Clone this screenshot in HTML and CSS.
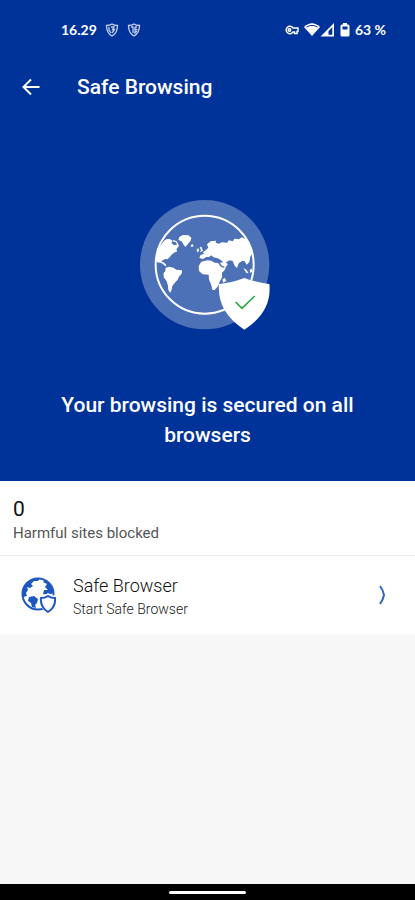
FILE: index.html
```html
<!DOCTYPE html>
<html lang="en">
<head>
<meta charset="utf-8">
<meta name="viewport" content="width=device-width, initial-scale=1">
<title>Safe Browsing</title>
<link rel="stylesheet" href="styles.css">
</head>
<body>
<div class="screen">
  <header class="hero">
    <div class="status">
      <div class="status-group">
        <span class="clock">16.29</span>
        <svg class="shield" viewBox="0 0 14 14" aria-hidden="true"><path d="M1.500 2.500Q5 2.500 7 1Q9 2.500 12.500 2.500Q12.500 10 7 13Q1.500 10 1.500 2.500Z"/><path d="M4 4v3l2 3M6 4h3L7.500 6.500H9.500L7 10"/></svg>
        <svg class="shield" viewBox="0 0 14 14" aria-hidden="true"><path d="M1.500 2.500Q5 2.500 7 1Q9 2.500 12.500 2.500Q12.500 10 7 13Q1.500 10 1.500 2.500Z"/><path d="M4 4h2v6M8 4h2M8 6.500h2.500M8 4v6l2-2"/></svg>
      </div>
      <div class="status-group status-right">
        <svg class="key" viewBox="0 0 14 10" aria-hidden="true"><path d="M8 3A3.700 3.700 0 1 0 8 7H9.500V8.500H12V6.500H13V3Z"/><circle cx="4.500" cy="5" r="1.200"/></svg>
        <svg class="signals" viewBox="0 0 31 16" aria-hidden="true"><path class="solid" d="M0 5Q8 -2.500 16 5L8 14Z"/><path class="gap" d="M2.500 5Q8 1.800 13.500 5"/><path class="solid" fill-rule="evenodd" d="M16.500 14.500 30 1V14.500ZM24.500 9V12.800H28.300V5.200Z"/></svg>
        <svg class="battery" viewBox="0 0 10 16" aria-hidden="true"><path fill-rule="evenodd" d="M3 1H7V2.500H8Q9.500 2.500 9.500 4V13Q9.500 14.500 8 14.500H2Q.5 14.500 .5 13V4Q.5 2.500 2 2.500H3ZM2.500 4.500V7.500H7.500V4.500Z"/></svg>
        <span>63 %</span>
      </div>
    </div>
    <div class="appbar">
      <button class="back" type="button" aria-label="Back"><svg viewBox="0 0 18 18" aria-hidden="true"><path d="M17.500 9H1.500M9 1.500 1.500 9 9 16.500"/></svg></button>
      <h1>Safe Browsing</h1>
    </div>
    <svg class="globe" viewBox="30 27 405 393" aria-hidden="true">
      <circle class="halo" cx="224" cy="224" r="194"/>
      <circle class="ring" cx="224" cy="224" r="147"/>
      <g class="land">
        <path d="M104 151Q111 145 121 148L128 153L124 159L133 166L141 164L138 157L128 154L130 150L140 154L147 167L139 178L142 184L132 188L124 195L119 202L112 208L105 207L98 211L94 215L103 218L109 226L106 229L96 220L80 216L77 205Q82 175 104 151Z"/>
        <path d="M148 141L158 135L176 136L184 144L181 154L173 163L166 171L160 163L155 154L145 150Z"/>
        <path d="M107 233L118 230L130 233L139 239L156 241L155 251L147 260L143 269L134 279L127 288L125 299L121 308L115 301L114 287L110 274L101 262L101 248L106 244Z"/>
        <path d="M182 165L188 163L191 168L185 172ZM200 178L206 175L207 184L201 187ZM209 172L214 170L219 182L210 187L213 180Z"/>
        <path d="M219 187L229 179L235 173L231 163L242 154L258 152L257 158L266 161L276 157L292 158L296 151L309 154L313 146L327 148L335 142L350 149Q362 168 367 190L361 200L358 216L350 224L344 214L337 212L326 220L321 234L314 227L308 213L299 211L290 216L284 222L277 214L268 207L260 204L250 202L244 196L237 201L229 201L219 207L208 204L212 194L222 192Z"/>
        <path d="M214 215L232 211L244 212L254 218L265 219L270 228L278 233L288 231L284 240L276 248L276 262L270 273L264 289L254 300L247 299L243 282L237 269L236 254L218 253L207 243L206 228Z"/>
        <path d="M283 216L294 222L287 232L274 226L270 218ZM340 234L349 239L356 250L349 249ZM359 239L366 236L367 245L361 249ZM277 269L284 263L289 272L280 278Z"/>
      </g>
      <path class="guard" d="M267 282Q310 277 343 264Q377 277 418 282Q427 365 343 419Q260 365 267 282Z"/>
      <path class="check" d="M317 336 336 355 374 318"/>
    </svg>
    <p class="message">Your browsing is secured on all browsers</p>
  </header>
  <main>
    <section class="stats">
      <strong>0</strong>
      <span>Harmful sites blocked</span>
    </section>
    <a class="row" href="#browser">
      <svg class="row-icon" viewBox="0 0 36 38" aria-hidden="true">
        <circle class="outline" cx="17" cy="18" r="15.500"/>
        <path class="fill" d="M2 14Q4 6 11 3L19 2L17 5L13 5L10 8L12 10L9 12L6 11L7 14L5 17L6 20L2 21ZM24 4Q31 8 32 17L28 19L22 18L23 14L27 14L24 11L26 8L22 6ZM8 21L13 20L17 23L16 27L14 29L15 32L11 31L10 27L7 25Z"/>
        <path class="cutout" d="M18 20Q24 20 27 17Q31 20 36 20V28Q34 35 27 38Q18 33 18 20Z"/>
        <path class="outline" d="M20 22Q24 22 27 20Q30 22 34 22Q35 31 27 36Q19 31 20 22Z"/>
      </svg>
      <span class="row-text"><span class="row-title">Safe Browser</span><span class="row-sub">Start Safe Browser</span></span>
      <svg class="chevron" viewBox="0 0 8 20" aria-hidden="true"><path d="M2 1Q5 5 6 10Q5 15 2 19"/></svg>
    </a>
  </main>
  <footer class="navbar"><span class="handle"></span></footer>
</div>
</body>
</html>
```
FILE: styles.css
```css
* { box-sizing: border-box; }

body {
  margin: 0;
  background: #f7f7f7;
  color: #222;
  font-family: Roboto, "Liberation Sans", sans-serif;
}

h1, p { margin: 0; }
svg { display: block; flex: none; }

.screen {
  min-height: 100vh;
  display: flex;
  flex-direction: column;
}

.hero {
  background: #003399;
  color: #fff;
  display: flex;
  flex-direction: column;
  padding-bottom: 31px;
}

.status {
  display: flex;
  align-items: center;
  justify-content: space-between;
  height: 60px;
  padding: 0 29px 0 61px;
  font: 700 14px/20px Lato, sans-serif;
}

.status-group {
  display: flex;
  align-items: center;
  gap: 8px;
}

.status-right { gap: 5px; }

.shield {
  width: 14px;
  height: 14px;
  fill: none;
  stroke: #c3cdec;
  stroke-width: 1.3;
}

.key {
  width: 14px;
  height: 10px;
  fill: none;
  stroke: #fff;
  stroke-width: 1.5;
}

.signals { width: 31px; height: 16px; }
.solid { fill: #fff; }
.gap { fill: none; stroke: #003399; }
.battery { width: 10px; height: 16px; fill: #fff; }

.appbar {
  display: flex;
  align-items: center;
  gap: 37px;
  height: 54px;
  padding: 0 22px;
}

.back {
  padding: 0;
  border: 0;
  background: none;
}

.back svg {
  width: 18px;
  height: 18px;
  fill: none;
  stroke: #fff;
  stroke-width: 2;
}

h1 {
  font-size: 21px;
  font-weight: 500;
  line-height: 30px;
}

.globe {
  width: 135px;
  height: 131px;
  margin: 85px auto 60px;
}

.halo { fill: #4d71b7; }
.ring { fill: none; stroke: #fff; stroke-width: 6; }
.land { fill: #fff; }
.guard { fill: #fff; }
.check { fill: none; stroke: #28a745; stroke-width: 5; }

.message {
  padding: 0 48px;
  font-size: 21px;
  font-weight: 500;
  line-height: 30px;
  text-align: center;
}

.stats {
  display: flex;
  flex-direction: column;
  padding: 16px 13px 11px;
  background: #fff;
  border-bottom: 1px solid #eee;
  font-size: 15px;
  line-height: 22px;
  color: #555;
}

.stats strong {
  font-size: 21px;
  font-weight: 400;
  line-height: 25px;
  color: #111;
}

.row {
  display: flex;
  align-items: center;
  gap: 16px;
  height: 78px;
  padding: 0 29px 0 21px;
  background: #fff;
  color: #111;
  text-decoration: none;
}

.row-icon { width: 36px; height: 38px; }
.outline { fill: none; stroke: #1c58bf; stroke-width: 2; }
.fill { fill: #1c58bf; }
.cutout { fill: #fff; }

.row-text {
  flex: 1;
  display: flex;
  flex-direction: column;
  padding-top: 4px;
}

.row-title { font-size: 18px; font-weight: 300; line-height: 24px; }
.row-sub { font-size: 14px; font-weight: 300; line-height: 22px; color: #222; }

.chevron {
  width: 8px;
  height: 20px;
  fill: none;
  stroke: #2e68bd;
  stroke-width: 2;
}

.navbar {
  display: flex;
  justify-content: center;
  align-items: center;
  height: 16px;
  margin-top: auto;
  background: #000;
}

.handle {
  width: 77px;
  height: 3px;
  border-radius: 2px;
  background: #fff;
}
```
